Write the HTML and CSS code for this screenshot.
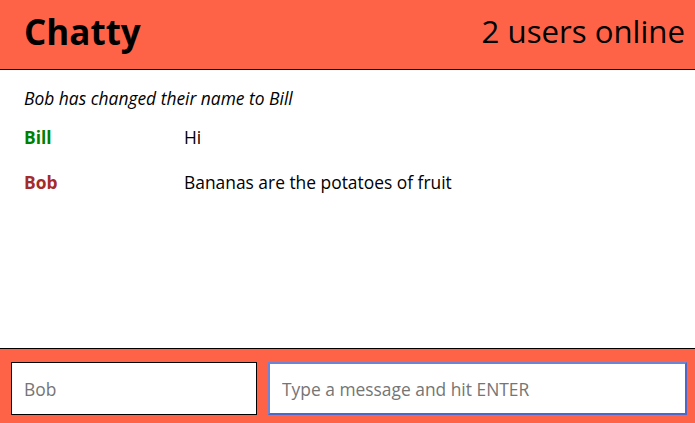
FILE: index.html
```html
<!DOCTYPE html>
<html>
<head>
<meta charset="utf-8">
<link rel="stylesheet" href="styles.css">
</head>
<body>
<div class="app">
  <nav class="navbar">
    <span class="brand">Chatty</span>
    <span class="online">2 users online</span>
  </nav>
  <main class="messages">
    <div class="notification">Bob has changed their name to Bill</div>
    <div class="message">
      <span class="username bill">Bill</span>
      <span class="content">Hi</span>
    </div>
    <div class="message">
      <span class="username bob">Bob</span>
      <span class="content">Bananas are the potatoes of fruit</span>
    </div>
  </main>
  <footer class="chatbar">
    <input class="chatbar-username" placeholder="Bob">
    <input class="chatbar-message focused" placeholder="Type a message and hit ENTER">
  </footer>
</div>
</body>
</html>
```

FILE: styles.css
```css
html, body {
  margin: 0;
  padding: 0;
  height: 100%;
}
body {
  font-family: "Open Sans", sans-serif;
  font-size: 17.4px;
  color: #000;
}
.app {
  display: flex;
  flex-direction: column;
  height: 100%;
}
.navbar {
  box-sizing: border-box;
  height: 70px;
  background: #ff6347;
  border-bottom: 1px solid #000;
  display: flex;
  align-items: center;
  justify-content: space-between;
  padding: 0 10px 7px 24px;
}
.brand {
  font-weight: 700;
  font-size: 35px;
}
.online {
  font-size: 31.2px;
}
.messages {
  flex: 1;
  padding: 16px 24px 0;
}
.notification {
  font-style: italic;
  height: 24px;
  line-height: 24px;
  margin-bottom: 15px;
}
.message {
  display: flex;
  height: 45px;
  align-items: flex-start;
  line-height: 24px;
}
.username {
  width: 160px;
  font-weight: 700;
}
.bill { color: #008000; }
.bob { color: #a52a2a; }
.chatbar {
  box-sizing: border-box;
  height: 75px;
  background: #ff6347;
  border-top: 1px solid #000;
  display: flex;
  align-items: flex-start;
  gap: 11px;
  padding: 13px 8px 0 11px;
}
.chatbar input {
  box-sizing: border-box;
  height: 53px;
  font-family: "Open Sans", sans-serif;
  font-size: 17.4px;
  padding: 0 12px;
  background: #fff;
  outline: none;
  border: 1px solid #000;
  margin: 0;
}
.chatbar input::placeholder {
  color: #757575;
}
.chatbar-username {
  width: 246px;
  flex: none;
}
.chatbar-message {
  flex: 1;
  min-width: 0;
  padding-left: 11px;
}
.chatbar-message.focused {
  border: 2px solid #4a67c9;
  border-top-color: #6c85d6;
  border-left-color: #6c85d6;
}
```
